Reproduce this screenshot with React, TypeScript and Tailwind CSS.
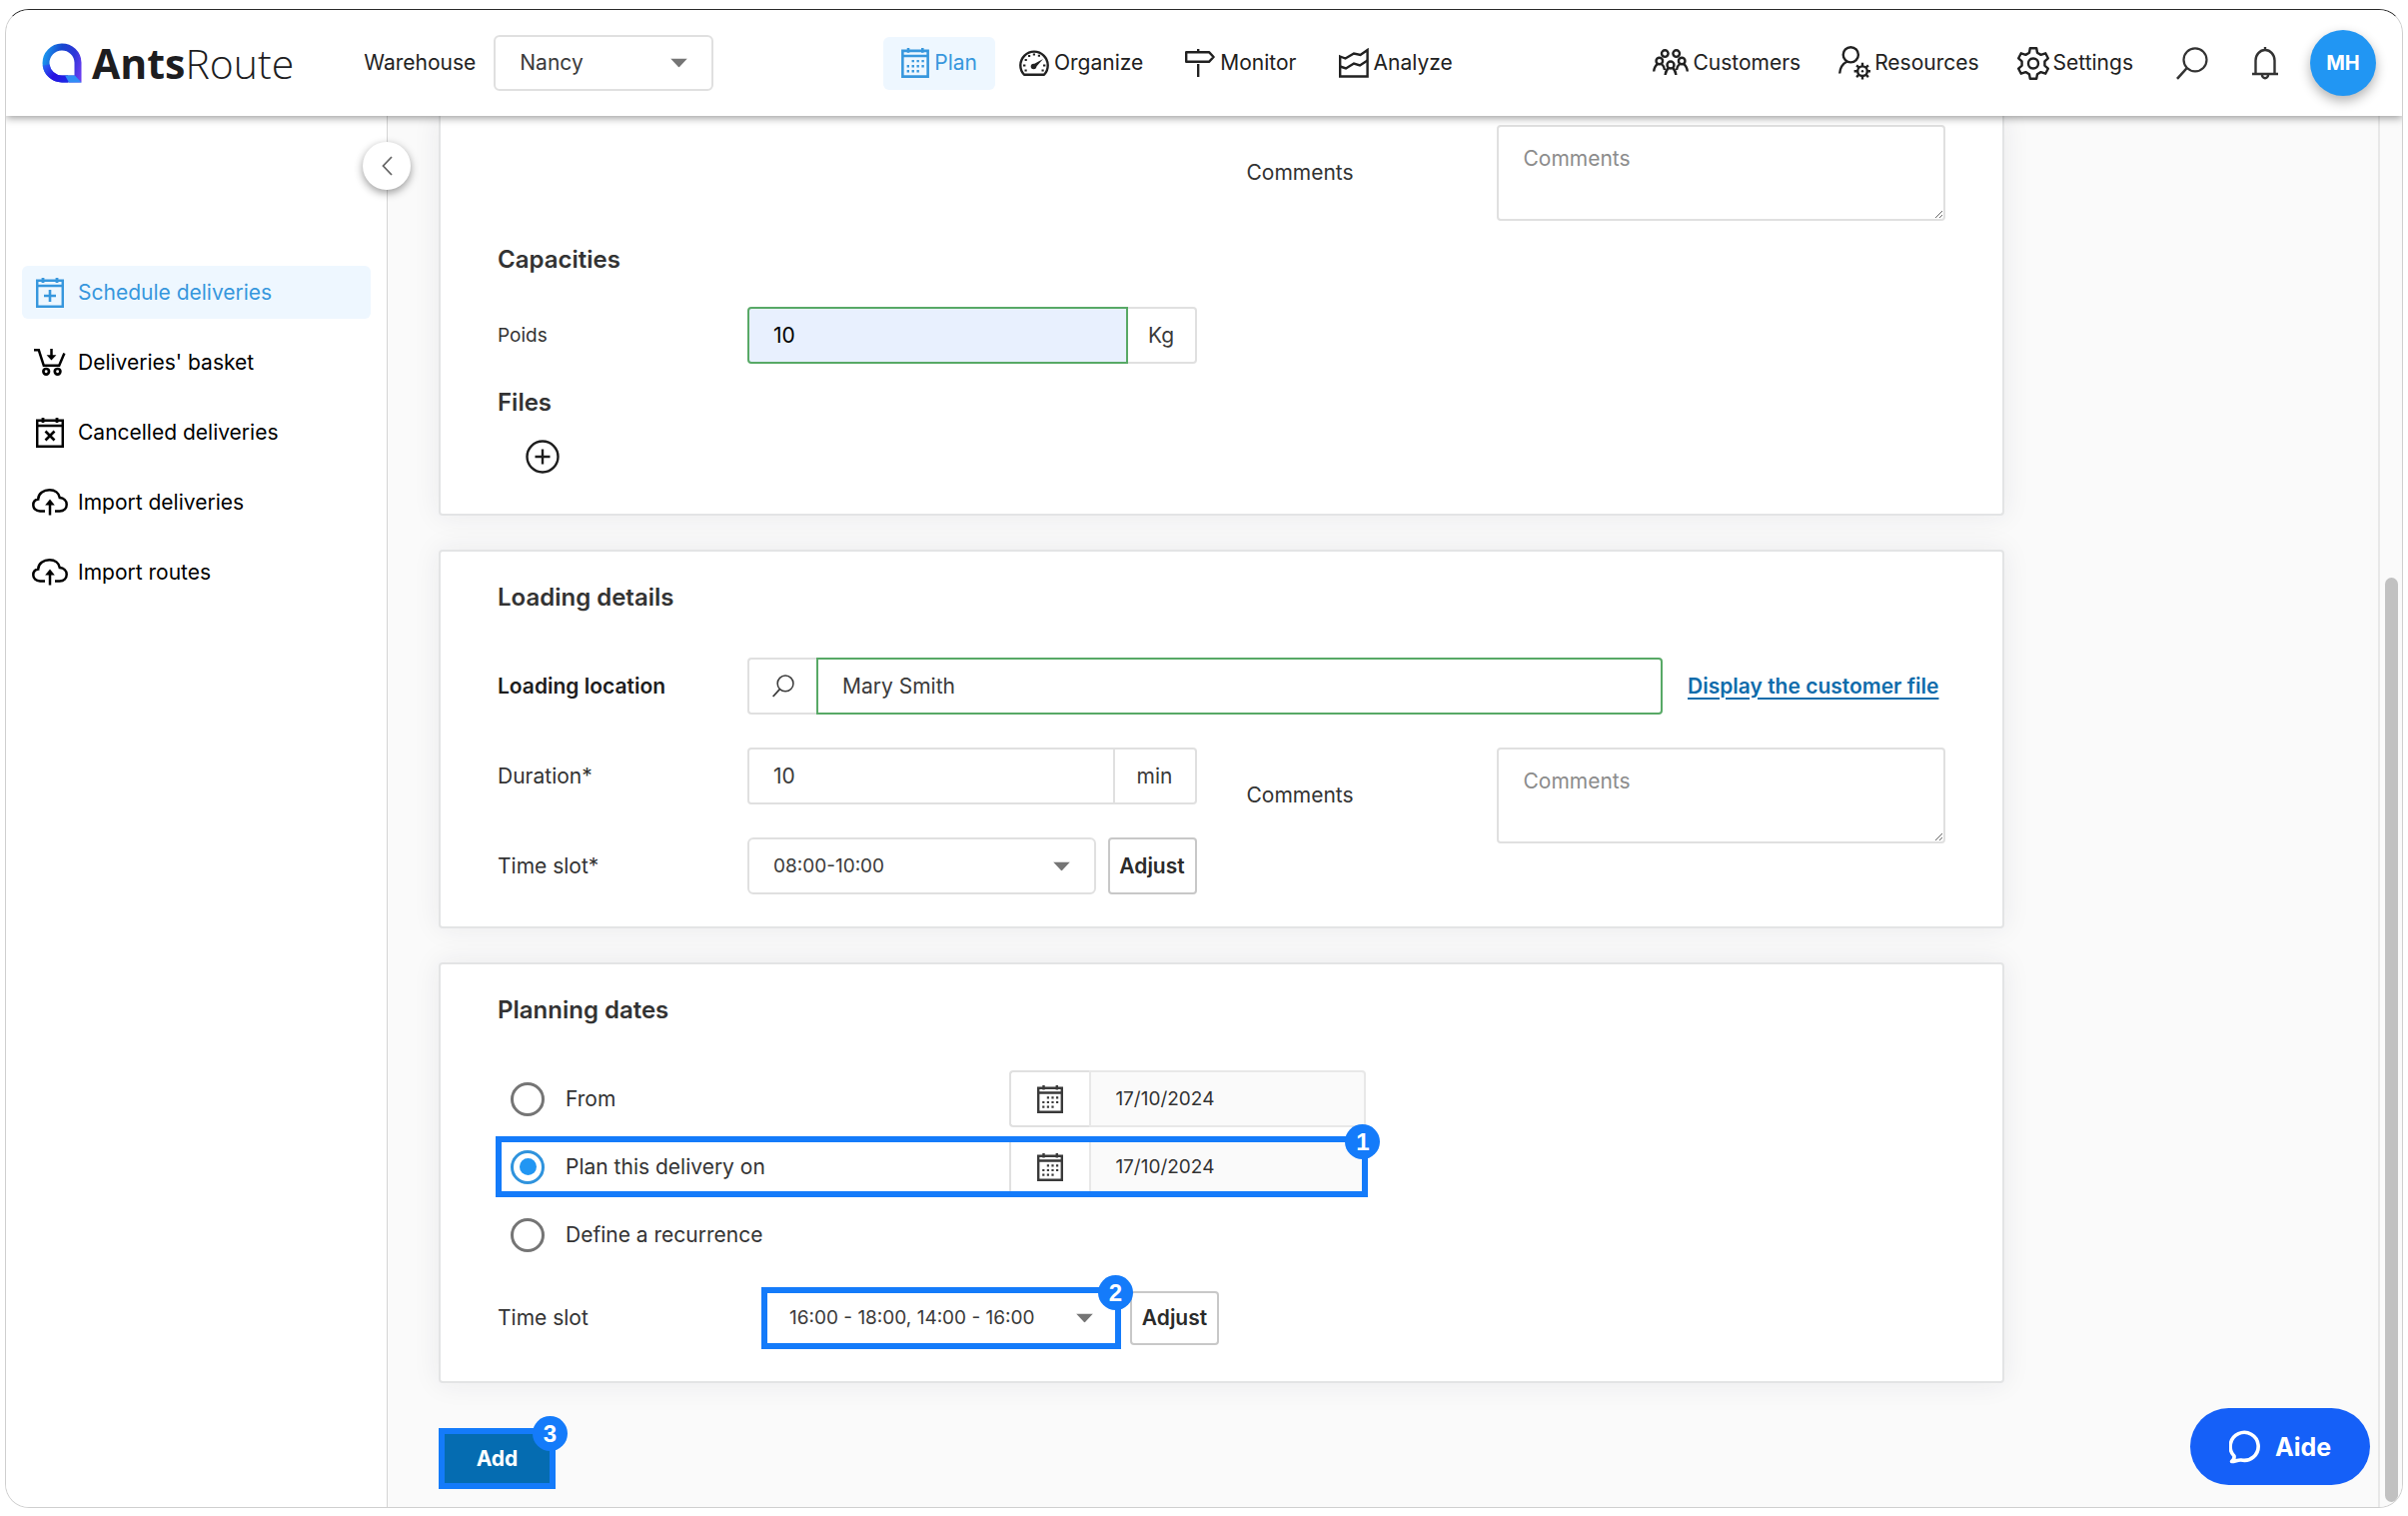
import { useState } from 'react'
import type { ReactNode } from 'react'
import clsx from 'clsx'

interface IconProps {
  className?: string
}

function CalendarIcon({ className }: IconProps) {
  return (
    <svg viewBox="0 0 26 28" fill="none" stroke="currentColor" strokeWidth="2.4" className={className} aria-hidden="true">
      <path d="M1.2 2.7h23.6v24H1.2zM1.2 7.5h23.6" />
      <path d="M6.5 0v4.5M19.8 0v4.5" />
      <path d="M9.8 12.3h2.2M14.4 12.3h2.2M19 12.3h2.2M5.2 17h2.2M9.8 17h2.2M14.4 17h2.2M19 17h2.2M5.2 21.7h2.2M9.8 21.7h2.2M14.4 21.7h2.2" strokeWidth="2.2" />
    </svg>
  )
}

function CalendarMarkIcon({ className, mark }: IconProps & { mark: string }) {
  return (
    <svg viewBox="0 0 28 30" fill="none" stroke="currentColor" strokeWidth="2.5" className={className} aria-hidden="true">
      <path d="M1.2 2.7h25.6v26H1.2zM1.2 8h25.6" />
      <path d="M7 0v5M21 0v5" strokeWidth="2.8" />
      <path d={mark} strokeWidth="2.6" />
    </svg>
  )
}

function GaugeIcon({ className }: IconProps) {
  return (
    <svg viewBox="0 0 30 26" fill="none" stroke="currentColor" strokeWidth="2.4" className={className} aria-hidden="true">
      <path d="M5 24.7A13.7 13.7 0 1 1 25 24.7z" strokeLinejoin="round" />
      <path d="M13 15 24 9l-8 9z" fill="currentColor" stroke="none" />
      <circle cx="14.5" cy="16.5" r="2.8" fill="currentColor" stroke="none" />
      <path d="M4 15.5h2.4M24 15.5h2.4M5.5 20.5h2.2M22.5 20.5h2.2M5.6 10h2.2M9 6h2.2M13.8 4.4h2.2M18.8 5.8h2.2" strokeWidth="2" />
    </svg>
  )
}

function SignpostIcon({ className }: IconProps) {
  return (
    <svg viewBox="0 0 30 28" fill="none" stroke="currentColor" strokeWidth="2.4" className={className} aria-hidden="true">
      <path d="M1.2 3.2h22.8l4.6 4.8-4.6 4.8H1.2z" strokeLinejoin="round" />
      <path d="M13.2 0v3M13.2 15v13" />
    </svg>
  )
}

function AreaChartIcon({ className }: IconProps) {
  return (
    <svg viewBox="0 0 30 30" fill="none" stroke="currentColor" strokeWidth="2.4" className={className} aria-hidden="true">
      <path d="M1.2 8.5 6.5 10.5 15 5.5 21.5 7 28.6 2V28.5H1.2z" />
      <path d="M1.2 18.5 7 20.5 15 15.5 21 17.5 28.6 12.5" />
    </svg>
  )
}

function PeopleIcon({ className }: IconProps) {
  return (
    <svg viewBox="0 0 36 28" fill="none" stroke="currentColor" strokeWidth="2.4" className={className} aria-hidden="true">
      <circle cx="12.3" cy="4.6" r="3.3" />
      <circle cx="23.7" cy="4.6" r="3.3" />
      <circle cx="6.8" cy="12" r="3.3" />
      <circle cx="29.2" cy="12" r="3.3" />
      <circle cx="18" cy="16" r="3.5" />
      <path d="M1.2 22.5c.3-3.5 1.4-6 3.8-7.6M8.8 14.9c1.8 1.4 2.8 3.4 3.2 6M34.8 22.5c-.3-3.5-1.4-6-3.8-7.6M27.2 14.9c-1.8 1.4-2.8 3.4-3.2 6M12.6 26c.3-3.5 1.4-5.4 3.6-7.2M23.4 26c-.3-3.5-1.4-5.4-3.6-7.2" />
    </svg>
  )
}

function ResourceIcon({ className }: IconProps) {
  return (
    <svg viewBox="0 0 32 34" fill="none" stroke="currentColor" strokeWidth="2.4" className={className} aria-hidden="true">
      <circle cx="12.3" cy="8.8" r="7.6" />
      <path d="M1.2 27.5c.4-5.4 3-9.8 7.6-12" />
      <circle cx="24" cy="25.2" r="4.8" />
      <path d="M24 16.8v3.4M24 30.2v3.4M15.6 25.2H19M29 25.2h3M18.1 19.3l2.4 2.4M27.5 28.7l2.4 2.4M18.1 31.1l2.4-2.4M27.5 21.7l2.4-2.4" />
      <circle cx="24" cy="25.2" r="1.2" fill="currentColor" stroke="none" />
    </svg>
  )
}

function GearIcon({ className }: IconProps) {
  return (
    <svg viewBox="0 0 32 33" fill="none" stroke="currentColor" strokeWidth="2.4" strokeLinejoin="round" className={className} aria-hidden="true">
      <path d="M12.8 1.2h6.4l.8 4.6 3.6 2.1 4.6-1.6 2.6 5-3.4 3.1v4.2l3.4 3.1-2.6 5-4.6-1.6-3.6 2.1-.8 4.6h-6.4l-.8-4.6-3.6-2.1-4.6 1.6-2.6-5 3.4-3.1v-4.2l-3.4-3.1 2.6-5 4.6 1.6 3.6-2.1z" />
      <circle cx="16" cy="16.5" r="5" />
    </svg>
  )
}

function SearchIcon({ className }: IconProps) {
  return (
    <svg viewBox="0 0 32 33" fill="none" stroke="currentColor" strokeWidth="2.2" className={className} aria-hidden="true">
      <circle cx="19" cy="12.8" r="11.5" />
      <path d="M10.8 21 1 31.8" strokeWidth="2.6" />
    </svg>
  )
}

function BellIcon({ className }: IconProps) {
  return (
    <svg viewBox="0 0 26 33" fill="none" stroke="currentColor" strokeWidth="2.4" className={className} aria-hidden="true">
      <path d="M3.5 26V13.5a9.5 10.5 0 0 1 19 0V26M0 27h26M13 0v3.5" />
      <path d="M10 28a3 3.2 0 0 0 6 0" />
    </svg>
  )
}

function BasketIcon({ className }: IconProps) {
  return (
    <svg viewBox="0 0 32 27" fill="none" stroke="currentColor" strokeWidth="2.5" className={className} aria-hidden="true">
      <path d="M0 1.3h4.8L9.8 16.8h15.4L30.4 4.6" />
      <path d="M17.5 0v8" />
      <path d="M12.6 6.2h9.8l-4.9 5.2z" fill="currentColor" stroke="none" />
      <circle cx="12.2" cy="22.8" r="2.8" strokeWidth="2.7" />
      <circle cx="23.6" cy="22.8" r="2.8" strokeWidth="2.7" />
    </svg>
  )
}

function CloudIcon({ className }: IconProps) {
  return (
    <svg viewBox="0 0 36 27" fill="none" stroke="currentColor" strokeWidth="2.5" className={className} aria-hidden="true">
      <path d="M13 22.4H8C4 22.4 1.3 19.8 1.3 16.4c0-3.2 2.2-5.4 4.9-5.8C6.2 4.8 11.6 1.3 17.6 1.3c5.6 0 9.4 3.1 10.2 7.7 4 .4 6.9 3 6.9 6.7 0 4-2.9 6.7-6.9 6.7H23" />
      <path d="M18 26.5V13" />
      <path d="M13.2 16.4 18 10.6l4.8 5.8z" fill="currentColor" stroke="none" />
    </svg>
  )
}

function LogoMark({ className }: IconProps) {
  return (
    <svg viewBox="0 0 40 40" fill="none" className={className} aria-hidden="true">
      <defs>
        <linearGradient id="logo-ring" x1="0" y1="16" x2="40" y2="26" gradientUnits="userSpaceOnUse">
          <stop offset="0" stopColor="#1c9cf0" />
          <stop offset="0.4" stopColor="#1746cf" />
          <stop offset="0.75" stopColor="#2f35d8" />
          <stop offset="1" stopColor="#6a3df0" />
        </linearGradient>
        <linearGradient id="logo-base" x1="2" y1="20" x2="26" y2="40" gradientUnits="userSpaceOnUse">
          <stop offset="0" stopColor="#2b6ff5" />
          <stop offset="0.5" stopColor="#2a10e0" />
          <stop offset="1" stopColor="#1a2be8" />
        </linearGradient>
      </defs>
      <path d="M36 36V19.5A16 16 0 1 0 20 36z" stroke="url(#logo-ring)" strokeWidth="7" />
      <path d="M4.2 22A16 16 0 0 0 20 36h6" stroke="url(#logo-base)" strokeWidth="7" />
      <path d="M23 32.5h10L39.5 39.5H27z" fill="#2f8df5" />
    </svg>
  )
}

function Caret() {
  return (
    <svg viewBox="0 0 17 9" className="pointer-events-none absolute right-[26px] top-1/2 h-[9px] w-[17px] -translate-y-1/2" aria-hidden="true">
      <path d="M0 0h17L8.5 9z" fill="#757575" />
    </svg>
  )
}

function Select({ id, value, className }: { id: string; value: string; className?: string }) {
  return (
    <div className={clsx('relative', className)}>
      <select
        id={id}
        defaultValue={value}
        className="h-full w-full appearance-none rounded-md border-2 border-[#e0e0e0] bg-white pl-6 pr-12 text-[#3a3a3a]"
      >
        <option>{value}</option>
      </select>
      <Caret />
    </div>
  )
}

function StepBadge({ step }: { step: number }) {
  return (
    <span className="pointer-events-none absolute -right-[18px] -top-[18px] flex size-[35px] items-center justify-center rounded-full bg-[#147bfa] font-['Liberation_Sans',sans-serif] text-2xl font-bold text-white">
      {step}
    </span>
  )
}

// Blue outline drawn over a control, with its step number
function Highlight({ step }: { step: number }) {
  return (
    <div className="pointer-events-none absolute -inset-[2px] z-10 border-[6px] border-[#147bfa]">
      <StepBadge step={step} />
    </div>
  )
}

interface NavItemProps {
  icon: ReactNode
  label: string
  active?: boolean
  className: string
}

function NavItem({ icon, label, active, className }: NavItemProps) {
  return (
    <a
      href="#"
      className={clsx('flex h-[53px] items-center rounded-md', className, active ? 'bg-[#eef7ff] text-[#3797dd]' : 'text-[#212121]')}
    >
      {icon}
      <span>{label}</span>
    </a>
  )
}

const mainNavClass = 'gap-[5px] px-[18px]'
const sideNavClass = 'gap-1 px-[19px]'

function Header() {
  return (
    <header className="relative z-20 flex h-[106px] shrink-0 items-center bg-white pl-9 pr-[26px] shadow-[0_2px_8px_rgba(0,0,0,0.4)]">
      <a href="#" className="flex items-center gap-[10px] text-[#1d1d1f]">
        <LogoMark className="size-10" />
        <span className="font-['Open_Sans',sans-serif] text-[41px] leading-[48px]">
          <span className="font-bold">Ants</span>
          <span className="font-light">Route</span>
        </span>
      </a>
      <label htmlFor="warehouse" className="ml-[70px] w-[130px] text-[#212121]">
        Warehouse
      </label>
      <Select id="warehouse" value="Nancy" className="h-14 w-[220px]" />

      <nav className="ml-[170px] flex gap-[6px]">
        <NavItem className={mainNavClass} icon={<CalendarIcon className="h-[30px] w-7" />} label="Plan" active />
        <NavItem className={mainNavClass} icon={<GaugeIcon className="h-[26px] w-[30px]" />} label="Organize" />
        <NavItem className={mainNavClass} icon={<SignpostIcon className="h-7 w-[30px]" />} label="Monitor" />
        <NavItem className={mainNavClass} icon={<AreaChartIcon className="size-[30px]" />} label="Analyze" />
      </nav>

      <div className="ml-auto flex items-center">
        <NavItem className={sideNavClass} icon={<PeopleIcon className="h-7 w-9" />} label="Customers" />
        <NavItem className={sideNavClass} icon={<ResourceIcon className="h-[34px] w-8" />} label="Resources" />
        <NavItem className={sideNavClass} icon={<GearIcon className="h-[33px] w-8" />} label="Settings" />
        <button type="button" aria-label="Search" className="ml-6">
          <SearchIcon className="h-[33px] w-8" />
        </button>
        <button type="button" aria-label="Notifications" className="ml-11">
          <BellIcon className="h-[33px] w-[26px]" />
        </button>
        <button type="button" className="ml-8 size-[66px] rounded-full bg-[#2196f3] text-xl font-bold text-white shadow-[0_5px_12px_rgba(0,0,0,0.3)]">
          MH
        </button>
      </div>
    </header>
  )
}

const sidebarItems = [
  { label: 'Schedule deliveries', icon: <CalendarMarkIcon mark="M14 12v12M8 18h12" className="h-[30px] w-7" />, active: true },
  { label: "Deliveries' basket", icon: <BasketIcon className="h-[27px] w-8" /> },
  { label: 'Cancelled deliveries', icon: <CalendarMarkIcon mark="M9.5 13.5l9 9M18.5 13.5l-9 9" className="h-[30px] w-7" /> },
  { label: 'Import deliveries', icon: <CloudIcon className="h-[27px] w-9" /> },
  { label: 'Import routes', icon: <CloudIcon className="h-[27px] w-9" /> },
]

function Sidebar() {
  return (
    <aside className="relative z-10 w-[382px] shrink-0 border-r border-[#d4d4d4] bg-white px-4 pt-[150px]">
      <button
        type="button"
        aria-label="Collapse menu"
        className="absolute -right-6 top-[26px] flex size-12 items-center justify-center rounded-full bg-white shadow-[0_3px_8px_rgba(0,0,0,0.4)]"
      >
        <svg viewBox="0 0 11 20" fill="none" stroke="#666" strokeWidth="1.8" className="h-5 w-[11px]" aria-hidden="true">
          <path d="M10 1 1.5 10l8.5 9" />
        </svg>
      </button>
      <ul className="flex flex-col gap-[17px]">
        {sidebarItems.map((item) => (
          <li key={item.label}>
            <a
              href="#"
              className={clsx(
                'flex h-[53px] items-center gap-[10px] rounded-md pl-[10px]',
                item.active ? 'bg-[#eef7ff] text-[#3797dd]' : 'text-black',
              )}
            >
              <span className="flex w-9 justify-center">{item.icon}</span>
              {item.label}
            </a>
          </li>
        ))}
      </ul>
    </aside>
  )
}

const cardClass = 'border-2 border-[#e3e4e5] bg-white px-[57px] pb-8 shadow-[0_0_28px_rgba(40,40,60,0.08)]'
const headingClass = 'text-2xl leading-[30px] font-semibold text-[#333]'
const labelClass = 'w-[250px] shrink-0'
const fieldClass = 'min-w-0 flex-1 border-2 px-6'
const addonClass = 'flex shrink-0 items-center justify-center border-2 border-[#e0e0e0] text-[#3a3a3a]'
const adjustClass = 'shrink-0 rounded border-2 border-[#c8c8c8] bg-white font-semibold text-[#2b2b2b]'

function CommentsField({ id }: { id: string }) {
  return (
    <div className="flex items-center">
      <label htmlFor={id} className={labelClass}>
        Comments
      </label>
      <textarea
        id={id}
        placeholder="Comments"
        className="block h-24 min-w-0 flex-1 resize rounded border-2 border-[#e0e0e0] bg-white px-[25px] py-[18px] placeholder:text-[#8c8c8c]"
      />
    </div>
  )
}

function CapacitiesCard() {
  return (
    <section className={clsx(cardClass, 'rounded-b border-t-0 pt-[9px]')}>
      <div className="grid grid-cols-2 gap-x-[50px]">
        <div className="col-start-2">
          <CommentsField id="delivery-comments" />
        </div>
      </div>
      <h2 className={clsx(headingClass, 'mt-6')}>Capacities</h2>
      <div className="mt-8 grid grid-cols-2 gap-x-[50px]">
        <div className="flex items-center">
          <label htmlFor="weight" className={clsx(labelClass, 'text-[19px]')}>
            Poids
          </label>
          <div className="flex h-[57px] flex-1">
            <input id="weight" defaultValue="10" className={clsx(fieldClass, 'rounded-l border-[#58a966] bg-[#e8f0fe] text-black')} />
            <span className={clsx(addonClass, 'w-[69px] rounded-r border-l-0')}>Kg</span>
          </div>
        </div>
      </div>
      <h2 className={clsx(headingClass, 'mt-6')}>Files</h2>
      <button type="button" aria-label="Add a file" className="mb-2 ml-7 mt-[22px] block">
        <svg viewBox="0 0 34 34" fill="none" stroke="#1d1d1d" strokeWidth="2.4" className="size-[34px]" aria-hidden="true">
          <circle cx="17" cy="17" r="15.5" />
          <path d="M17 9.5v15M9.5 17h15" />
        </svg>
      </button>
    </section>
  )
}

function LoadingCard() {
  return (
    <section className={clsx(cardClass, 'mt-[34px] rounded pt-[31px]')}>
      <h2 className={headingClass}>Loading details</h2>
      <div className="mt-[45px] flex items-center">
        <label htmlFor="location" className={clsx(labelClass, 'font-semibold text-[#1d1d1d]')}>
          Loading location
        </label>
        <div className="flex h-[57px] flex-1">
          <span className={clsx(addonClass, 'w-[69px] rounded-l border-r-0')}>
            <SearchIcon className="h-[23px] w-[22px]" />
          </span>
          <input id="location" defaultValue="Mary Smith" className={clsx(fieldClass, 'rounded-r border-[#58a966] bg-white text-[#3a3a3a]')} />
        </div>
        <a href="#" className="ml-[25px] w-[258px] font-semibold text-[#0f6cab] underline decoration-2 underline-offset-4">
          Display the customer file
        </a>
      </div>
      <div className="mt-[33px] grid grid-cols-2 items-start gap-x-[50px]">
        <div className="flex flex-col gap-[33px]">
          <div className="flex h-[57px] items-center">
            <label htmlFor="duration" className={labelClass}>
              Duration*
            </label>
            <div className="flex h-full min-w-0 flex-1">
              <input id="duration" defaultValue="10" className={clsx(fieldClass, 'rounded-l border-[#e0e0e0] bg-white text-[#3a3a3a]')} />
              <span className={clsx(addonClass, 'w-[82px] rounded-r border-l-0')}>min</span>
            </div>
          </div>
          <div className="flex h-[57px] items-center">
            <label htmlFor="loading-slot" className={labelClass}>
              Time slot*
            </label>
            <Select id="loading-slot" value="08:00-10:00" className="h-full flex-1 text-[19px]" />
            <button type="button" className={clsx(adjustClass, 'ml-3 h-full w-[89px]')}>
              Adjust
            </button>
          </div>
        </div>
        <CommentsField id="loading-comments" />
      </div>
    </section>
  )
}

const planOptions = [
  { id: 'from', label: 'From', date: '17/10/2024' },
  { id: 'on', label: 'Plan this delivery on', date: '17/10/2024', step: 1 },
  { id: 'recurrence', label: 'Define a recurrence' },
]

function PlanningCard() {
  const [option, setOption] = useState('on')

  return (
    <section className={clsx(cardClass, 'mt-[34px] rounded pt-[31px]')}>
      <h2 className={headingClass}>Planning dates</h2>
      <div className="mt-[45px] flex w-3/5 flex-col gap-[11px]">
        {planOptions.map((item) => (
          <div key={item.id} className="relative flex h-[57px] items-center">
            <label className="flex flex-1 items-center gap-[21px] pl-[13px]">
              <input
                type="radio"
                name="plan"
                checked={option === item.id}
                onChange={() => setOption(item.id)}
                className="flex size-[34px] appearance-none items-center justify-center rounded-full border-[3px] border-[#757575] before:size-[17px] before:rounded-full checked:border-[#2f93dd] checked:before:bg-[#2196f3]"
              />
              {item.label}
            </label>
            {item.date && (
              <div className="flex h-full w-[357px]">
                <span className={clsx(addonClass, 'w-20 rounded-l border-r-0')}>
                  <CalendarIcon className="h-7 w-[26px]" />
                </span>
                <input
                  aria-label={`${item.label} date`}
                  defaultValue={item.date}
                  className={clsx(fieldClass, 'rounded-r border-[#e8e8e8] bg-[#fafafa] text-[19px]')}
                />
              </div>
            )}
            {item.step && <Highlight step={item.step} />}
          </div>
        ))}
      </div>
      <div className="mt-6 flex h-[62px] items-center">
        <label htmlFor="planning-slot" className="w-[266px]">
          Time slot
        </label>
        <div className="relative h-[58px] w-[356px]">
          <Select id="planning-slot" value="16:00 - 18:00, 14:00 - 16:00" className="h-full text-[19px]" />
          <Highlight step={2} />
        </div>
        <button type="button" className={clsx(adjustClass, 'ml-[11px] h-[54px] w-[89px]')}>
          Adjust
        </button>
      </div>
    </section>
  )
}

export default function App() {
  return (
    <div className="flex min-h-screen bg-white px-[5px] pb-2 pt-[9px] font-['Inter',sans-serif] text-[21px] leading-7 text-[#333]">
      <div className="flex flex-1 flex-col overflow-hidden rounded-[24px] border border-[#cfcfcf] border-t-[#2a2a2a]">
        <Header />
        <div className="flex flex-1">
          <Sidebar />
          <main className="relative flex-1 bg-[#fafafa] pb-4 pl-[51px]">
            <form className="w-full max-w-[1567px]">
              <CapacitiesCard />
              <LoadingCard />
              <PlanningCard />
              <button type="button" className="relative mt-[45px] block h-[61px] w-[117px] border-[6px] border-[#147bfa] bg-[#056cb1] font-bold text-white">
                Add
                <StepBadge step={3} />
              </button>
            </form>
            <button type="button" className="absolute bottom-[22px] right-2 flex h-[77px] w-[180px] items-center justify-center gap-[14px] rounded-full bg-[#1560f8] text-[25px] font-bold text-white">
              <svg viewBox="0 0 32 34" fill="none" stroke="currentColor" strokeWidth="3.6" strokeLinejoin="round" strokeLinecap="round" className="h-[34px] w-8" aria-hidden="true">
                <path d="M2.5 31.5C4.5 30 5.3 28 5 26A14 14 0 1 1 12 30C9 29.5 6 31.5 2.5 31.5z" />
              </svg>
              Aide
            </button>
          </main>
          <div className="flex w-6 shrink-0 flex-col items-center justify-end border-l-2 border-[#e8e8e8] bg-[#fafafa] pb-[5px]">
            <div className="h-2/3 w-[13px] rounded-full bg-[#c1c1c1]" />
          </div>
        </div>
      </div>
    </div>
  )
}
